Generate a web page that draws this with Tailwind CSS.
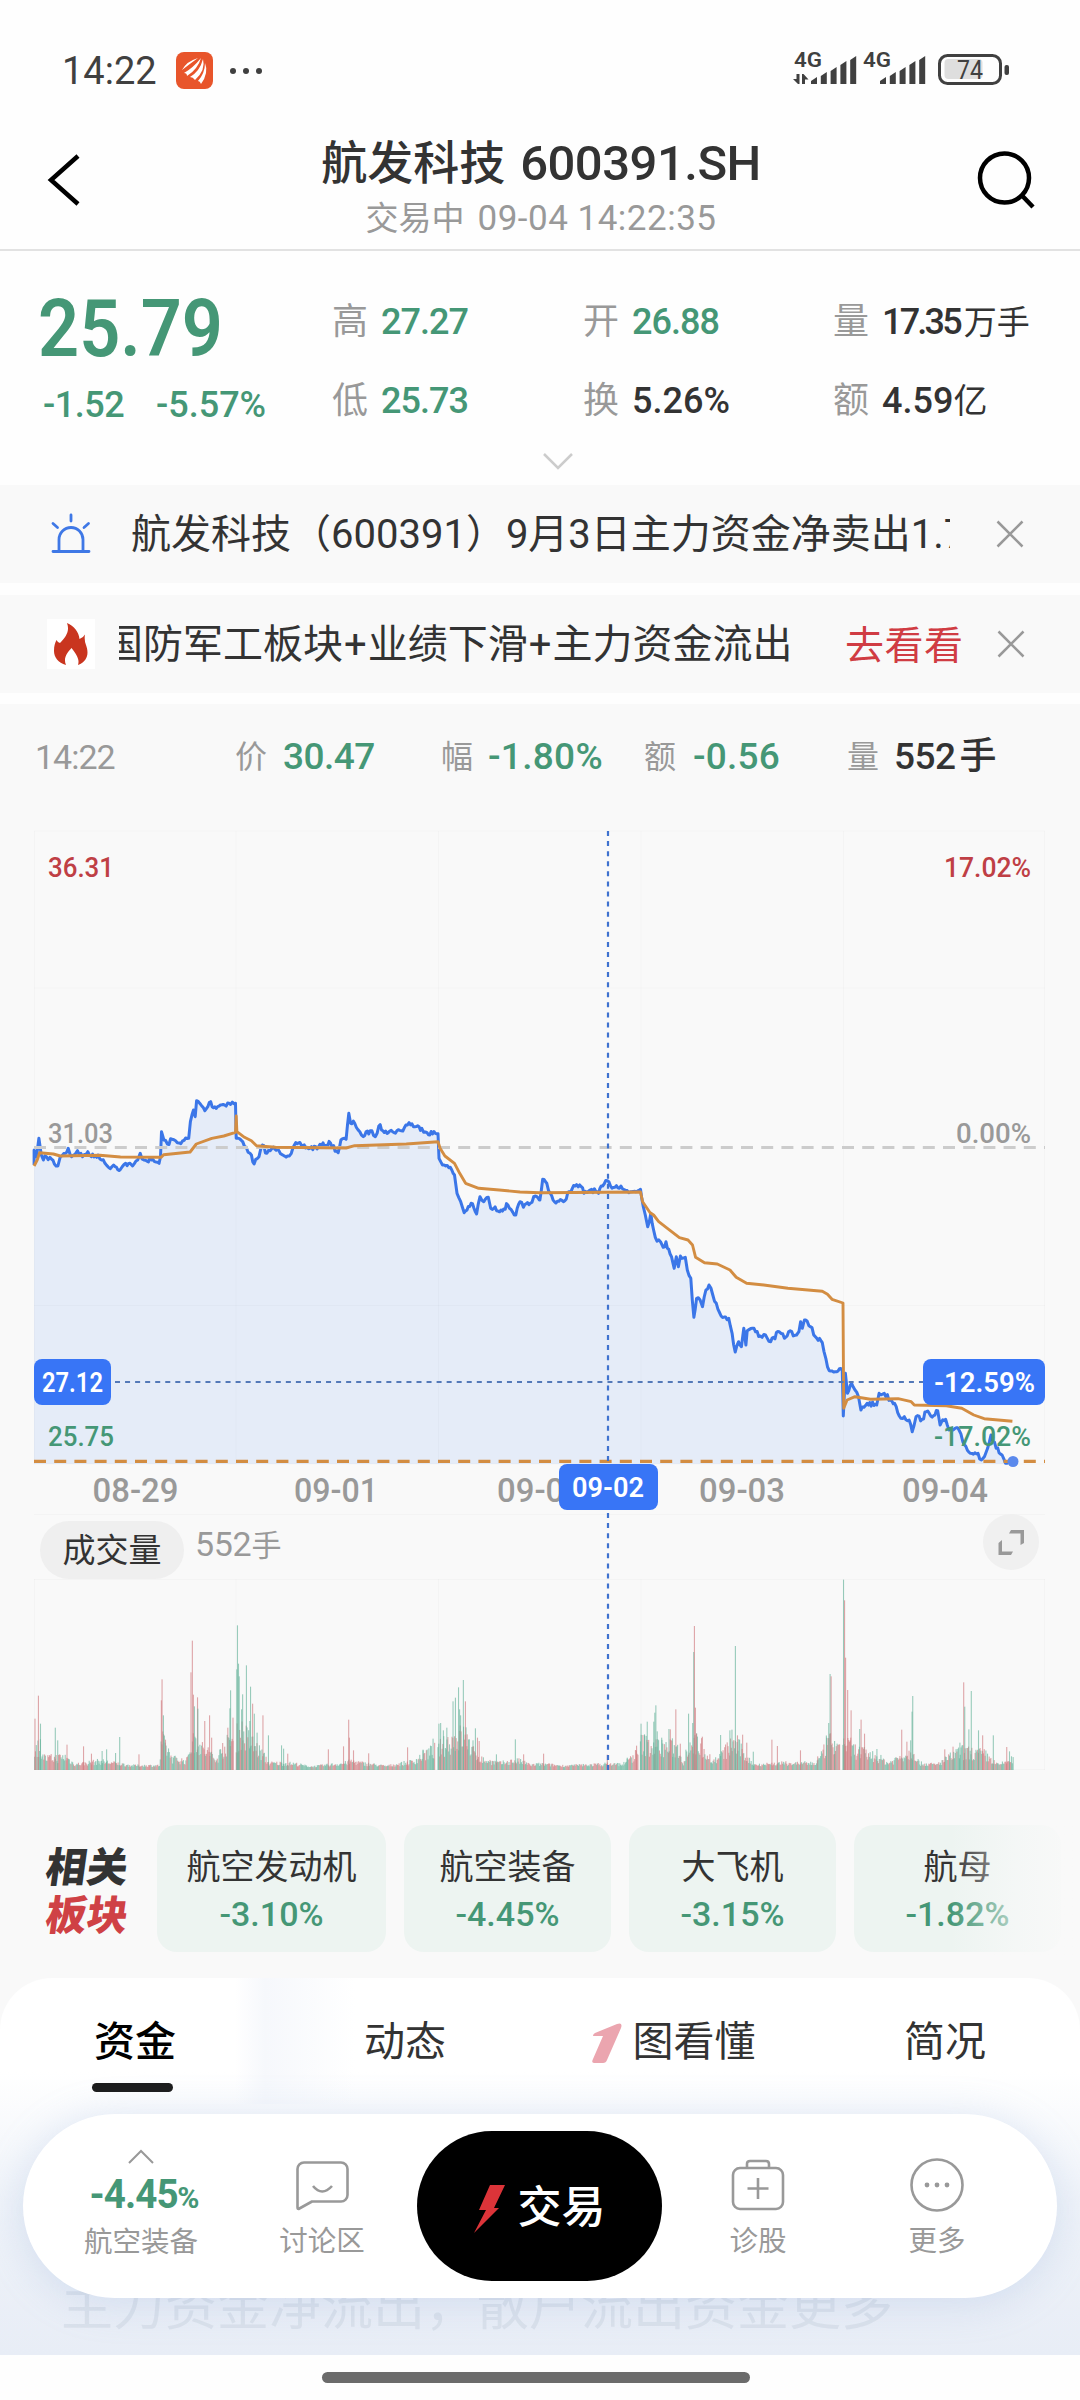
<!DOCTYPE html>
<html lang="zh-CN">
<head>
  <meta charset="UTF-8" />
  <title>航发科技 600391.SH</title>
  <script src="https://cdn.jsdelivr.net/npm/@tailwindcss/browser@4"></script>
</head>
<body class="w-[1080px] h-[2400px] overflow-hidden bg-[#fefefe] text-[#333] leading-none whitespace-nowrap font-['Roboto','Noto_Sans_CJK_SC',sans-serif]">
<div class="relative w-[1080px] h-[2400px] flex flex-col">

  <!-- Status bar -->
  <div class="h-[105px] pt-[52px] pl-[62px] pr-[70px] flex justify-between shrink-0">
    <div class="flex h-[37px] items-center">
      <span class="text-[38px] w-[114px] text-[#404040]">14:22</span>
      <svg class="w-[37px] h-[37px]" viewBox="0 0 37 37">
        <rect width="37" height="37" rx="8" fill="#e8552b"/>
        <path d="M6 18Q11 9 22 6Q15 11 6 18ZM8 21Q17 16 25 6Q22 17 11 24Q11 21 8 21ZM14 25Q24 19 27 7Q30 18 19 28Q17 25 14 25ZM22 29Q29 21 29 11Q33 21 25 32Q24 29 22 29Z" fill="#fff"/>
      </svg>
      <svg class="ml-4 w-[34px] h-[8px]" viewBox="0 0 34 8" fill="#404040"><circle cx="4" cy="4" r="3"/><circle cx="17" cy="4" r="3"/><circle cx="30" cy="4" r="3"/></svg>
    </div>
    <svg class="w-[218px] h-[41px] -mt-1" viewBox="792 48 218 41" fill="#404040">
      <text x="794" y="67" font-size="20" font-weight="600" textLength="28" lengthAdjust="spacingAndGlyphs">4G</text>
      <text x="863" y="67" font-size="20" font-weight="600" textLength="28" lengthAdjust="spacingAndGlyphs">4G</text>
      <path d="M796.500 74h3v10h-1.500L793 79h3.500zM802 74h1.500l5 5.500h-3.500V84h-3z"/>
      <path id="bars"/>
      <rect x="939.500" y="55.500" width="61" height="28" rx="8" fill="none" stroke="#404040" stroke-width="3"/>
      <rect x="944.500" y="59" width="38" height="20" rx="4" fill="#dedede"/>
      <rect x="1004.500" y="65" width="4.500" height="10" rx="2"/>
      <text x="957" y="78.500" font-size="25" textLength="26" lengthAdjust="spacingAndGlyphs">74</text>
    </svg>
  </div>

  <!-- Title bar -->
  <div class="h-[146px] border-b-2 border-[#e2e2e2] flex justify-between pl-[46px] pr-[44px] shrink-0">
    <svg class="w-9 h-14 mt-[47px]" viewBox="0 0 36 56"><path d="M32 4L5 28L32 52" fill="none" stroke="#000" stroke-width="4.500"/></svg>
    <div class="flex flex-col items-center pt-[33px] pl-[24px]">
      <div class="flex items-center h-[50px] text-[49px] font-medium"><span class="text-[46px] mr-[15px]">航发科技</span><span class="tracking-[-0.5px]">600391.SH</span></div>
      <div class="flex items-center h-9 mt-3 text-[35px] text-[#999]"><span class="text-[33px] mr-[13px]">交易中</span><span class="tracking-[0.5px]">09-04 14:22:35</span></div>
    </div>
    <svg class="w-[60px] h-[60px] mt-[45px]" viewBox="0 0 60 60" fill="none" stroke="#000" stroke-width="4.500"><circle cx="28.500" cy="28" r="24.500"/><path d="M45.500 45L57 57"/></svg>
  </div>

  <!-- Quote -->
  <div class="h-[234px] shrink-0 flex flex-col">
    <div class="h-[190px] flex pl-[38px] text-[#459776] font-medium">
      <div class="w-[294px] pt-[38px]">
        <div class="text-[80px] font-semibold"><span class="inline-block origin-left scale-x-90">25.79</span></div>
        <div class="mt-[18px] pl-[5px] flex text-[36px]"><span class="w-[113px] tracking-[-0.5px]">-1.52</span><span>-5.57%</span></div>
      </div>
      <div class="grid grid-cols-[251px_250px_247px] grid-rows-[79px_79px] pt-[31px] text-[36px] tracking-[-1px] items-center">
        <div class="flex items-center"><span class="w-[49px] text-[36px] font-normal text-[#999]">高</span><span>27.27</span></div>
        <div class="flex items-center"><span class="w-[49px] text-[36px] font-normal text-[#999]">开</span><span>26.88</span></div>
        <div class="flex items-center"><span class="w-[49px] text-[36px] font-normal text-[#999]">量</span><span class="text-[#333] tracking-[-2.8px]">17.35<span class="text-[33px] tracking-normal ml-1 font-normal">万手</span></span></div>
        <div class="flex items-center"><span class="w-[49px] text-[36px] font-normal text-[#999]">低</span><span>25.73</span></div>
        <div class="flex items-center"><span class="w-[49px] text-[36px] font-normal text-[#999]">换</span><span class="text-[#333] tracking-normal">5.26%</span></div>
        <div class="flex items-center"><span class="w-[49px] text-[36px] font-normal text-[#999]">额</span><span class="text-[#333] tracking-normal">4.59<span class="text-[34px] font-normal">亿</span></span></div>
      </div>
    </div>
    <svg class="w-8 h-5 ml-[542px] mt-[10px]" viewBox="0 0 32 20"><path d="M2 3L16 17L30 3" fill="none" stroke="#ccc" stroke-width="2.500"/></svg>
  </div>

  <!-- Notices -->
  <div class="h-[98px] shrink-0 bg-[#f9f9f9] flex items-center pl-[50px] text-[40px]">
    <svg class="w-[42px] h-[42px] mr-[39px]" viewBox="0 0 42 42" fill="none" stroke="#3f78e6" stroke-width="2.800" stroke-linecap="round"><path d="M3 38.500H39M9 38V26.500a12 12 0 0 1 24 0V38M21 2V8M3 10.500l4.500 4M38.500 10.500l-4.500 4"/></svg>
    <div class="w-[819px] overflow-hidden h-[50px] leading-[50px] pt-[1px]">航发科技（600391）9月3日主力资金净卖出1.74亿元</div>
    <svg class="w-7 h-7 ml-[46px]" viewBox="0 0 28 28"><path d="M1.500 1.500L26.500 26.500M26.500 1.500L1.500 26.500" stroke="#999" stroke-width="2.500"/></svg>
  </div>
  <div class="h-[98px] mt-3 shrink-0 bg-[#f9f9f9] flex items-center pl-[47px] text-[40px]">
    <div class="w-12 h-[50px] bg-white mr-6 flex items-center justify-center">
      <svg class="w-[34px] h-[42px]" viewBox="0 0 34 42"><path d="M13 0C20 3 25 9 25.500 16Q29 15 31 11.500Q30 17 32 22C35 30 34 38 24 42C26 36 22 31 17.500 25C13 30 9 35 12 42C4 40 0 34 0 28C0 23 1 20 2.500 17Q4 20 6 20C12 14 16 8 13 0Z" fill="#c9351f"/></svg>
    </div>
    <div class="w-[671px] overflow-hidden h-[50px] leading-[50px] pt-[1px] flex"><span class="-ml-4">国防军工板块<span class="mx-[1px]">+</span>业绩下滑<span class="mx-[1px]">+</span>主力资金流出</span></div>
    <span class="text-[#d03c43] text-[39px] ml-[55px] mt-1 tracking-[0.5px]">去看看</span>
    <svg class="w-7 h-7 ml-[33px]" viewBox="0 0 28 28"><path d="M1.500 1.500L26.500 26.500M26.500 1.500L1.500 26.500" stroke="#999" stroke-width="2.500"/></svg>
  </div>

  <!-- Chart -->
  <div class="relative mt-[11px] h-[1121px] shrink-0 bg-[#f9f9f9] flex flex-col">
    <div class="h-[105px] flex items-center pl-[35px] text-[37px] font-medium text-[#459776]">
      <span class="w-[200px] text-[34px] font-normal text-[#999] tracking-[-1px]">14:22</span>
      <span class="w-[48px] text-[32px] font-normal text-[#999]">价</span><span class="w-[158px] tracking-[-0.5px]">30.47</span>
      <span class="w-[47px] text-[32px] font-normal text-[#999]">幅</span><span class="w-[156px] tracking-[0.3px]">-1.80%</span>
      <span class="w-[49px] text-[32px] font-normal text-[#999]">额</span><span class="w-[154px] tracking-[0.2px]">-0.56</span>
      <span class="w-[47px] text-[32px] font-normal text-[#999]">量</span><span class="text-[#333] tracking-[-0.5px]">552<span class="ml-1">手</span></span>
    </div>
    <svg class="w-[1080px] h-[706px] shrink-0" viewBox="0 809 1080 706">
      <path id="area" fill="#e5ecf8"/>
      <path d="M34 831H1045M34 988H1045M34 1305.500H1045M34 1464H1045M34 1514.500H1045M34.500 831V1464M236 831V1464M438.500 831V1464M641 831V1464M843.500 831V1464M1044.500 831V1464" stroke="#000" stroke-opacity="0.020" fill="none"/>
      <polyline id="price" fill="none" stroke="#3b76e8" stroke-width="3" stroke-linejoin="round"/>
      <path d="M34 1147.500H1045" stroke="#ccc" stroke-width="2.800" stroke-dasharray="12 8.200"/>
      <polyline id="avg" fill="none" stroke="#d38d42" stroke-width="2.900" stroke-linejoin="round"/>
      <path d="M34 1461.300H1045" stroke="#d38d42" stroke-width="3.200" stroke-dasharray="12 8.200"/>
      <circle cx="1013" cy="1461.500" r="5.500" fill="#5b89ec"/>
      <path d="M115 1382H923" stroke="#5479b8" stroke-width="2" stroke-dasharray="5 5.050"/>
      <g font-size="28" font-weight="500">
        <text x="48" y="877" textLength="66" lengthAdjust="spacingAndGlyphs" fill="#bf3f45">36.31</text>
        <text x="944" y="877" textLength="87" lengthAdjust="spacingAndGlyphs" fill="#bf3f45">17.02%</text>
        <text x="48" y="1143" textLength="65" lengthAdjust="spacingAndGlyphs" fill="#999">31.03</text>
        <text x="956" y="1143" textLength="75" lengthAdjust="spacingAndGlyphs" fill="#999">0.00%</text>
        <text x="48" y="1446" textLength="66" lengthAdjust="spacingAndGlyphs" fill="#459776">25.75</text>
        <text x="934" y="1446" textLength="97" lengthAdjust="spacingAndGlyphs" fill="#459776">-17.02%</text>
      </g>
      <g font-size="33" font-weight="500" fill="#999" text-anchor="middle">
        <text x="135.500" y="1502" textLength="86" lengthAdjust="spacingAndGlyphs">08-29</text>
        <text x="336" y="1502" textLength="84" lengthAdjust="spacingAndGlyphs">09-01</text>
        <text x="540" y="1502" textLength="86" lengthAdjust="spacingAndGlyphs">09-02</text>
        <text x="742" y="1502" textLength="86" lengthAdjust="spacingAndGlyphs">09-03</text>
        <text x="945" y="1502" textLength="86" lengthAdjust="spacingAndGlyphs">09-04</text>
      </g>
      <g fill="#3875f6">
        <rect x="34" y="1359" width="77" height="46" rx="8"/>
        <rect x="923" y="1359" width="122" height="46" rx="8"/>
        <rect x="559" y="1464" width="99" height="46" rx="8"/>
      </g>
      <g font-size="28" font-weight="600" fill="#fff">
        <text x="42" y="1392" textLength="61" lengthAdjust="spacingAndGlyphs">27.12</text>
        <text x="934" y="1392" textLength="101" lengthAdjust="spacingAndGlyphs">-12.59%</text>
        <text x="572" y="1497" textLength="72" lengthAdjust="spacingAndGlyphs">09-02</text>
      </g>
    </svg>
    <div class="h-16 flex items-start justify-between pl-10 pr-[41px]">
      <div class="flex">
        <span class="mt-[6px] w-36 h-[58px] rounded-full bg-[#efefef] flex items-center justify-center text-[33px]">成交量</span>
        <span class="mt-[12px] ml-[11px] text-[34px] text-[#999] tracking-[-0.3px]">552<span class="text-[30px]">手</span></span>
      </div>
      <svg class="w-14 h-14 -mt-[1px]" viewBox="0 0 56 56"><circle cx="28" cy="28" r="28" fill="#f0f0f0"/><path d="M28 16H41V29L37.500 31V19.500H26ZM19 26V37.500H30L28 41H15.500V29Z" fill="#999"/></svg>
    </div>
    <svg id="volume" class="w-[1080px] h-[192px] shrink-0" viewBox="0 1579 1080 192">
      <path d="M34 1579.500H1045M34 1769.500H1045M34.500 1579V1770M236 1579V1770M438.500 1579V1770M641 1579V1770M843.500 1579V1770M1044.500 1579V1770" stroke="#000" stroke-opacity="0.020" fill="none"/>
    </svg>
    <!-- Crosshair over both charts -->
    <svg class="absolute left-[606px] top-[127px] w-1 h-[940px]" viewBox="0 831 4 940"><path d="M2 831V1464M2 1513V1770" stroke="#3f72cf" stroke-width="2.200" stroke-dasharray="5 5.080"/></svg>
  </div>

  <!-- Related sectors -->
  <div class="relative h-[153px] shrink-0 bg-[#f9f9f9] flex pl-[46px]">
    <div class="w-[111px] pt-[23px] flex flex-col items-start gap-[7px] text-[41px] font-black">
      <span class="-skew-x-8">相关</span><span class="-skew-x-8 text-[#cf4145]">板块</span>
    </div>
    <div class="flex gap-[18px]">
      <div class="w-[229px] h-[127px] rounded-[20px] bg-[#edf4f1] flex flex-col items-center pt-[25px] gap-[13px]"><span class="text-[34px]">航空发动机</span><span class="text-[34px] font-medium text-[#459776]">-3.10%</span></div>
      <div class="w-[207px] h-[127px] rounded-[20px] bg-[#edf4f1] flex flex-col items-center pt-[25px] gap-[13px]"><span class="text-[34px]">航空装备</span><span class="text-[34px] font-medium text-[#459776]">-4.45%</span></div>
      <div class="w-[207px] h-[127px] rounded-[20px] bg-[#edf4f1] flex flex-col items-center pt-[25px] gap-[13px]"><span class="text-[34px]">大飞机</span><span class="text-[34px] font-medium text-[#459776]">-3.15%</span></div>
      <div class="w-[207px] h-[127px] rounded-[20px] bg-[#edf4f1] flex flex-col items-center pt-[25px] gap-[13px]"><span class="text-[34px]">航母</span><span class="text-[34px] font-medium text-[#459776]">-1.82%</span></div>
    </div>
    <div class="absolute right-0 top-0 w-[130px] h-[130px] bg-linear-to-r from-[#f9f9f9]/0 via-[#f9f9f9]/60 to-[#f9f9f9]"></div>
  </div>

  <!-- Tabs -->
  <div class="h-[377px] shrink-0 bg-[#f9f9f9]">
    <div class="relative h-full overflow-hidden rounded-t-[52px] bg-linear-to-b from-white from-25% via-[#eff3f9] via-60% to-[#e8edf6]">
      <div class="absolute left-[235px] top-0 w-[120px] h-[126px] bg-linear-to-r from-white/0 via-[#f6f8fc] via-25% to-white/0"></div>
      <div class="relative grid grid-cols-4 h-[126px] text-[41px]">
        <div class="flex flex-col items-center pt-[44px] text-black font-medium">资金<span class="mt-5 -ml-[5px] w-[81px] h-[9px] rounded-full bg-[#1c1c1c]"></span></div>
        <div class="flex justify-center pt-[44px]">动态</div>
        <div class="flex justify-center pt-[44px] -ml-[3px]"><svg class="w-[31px] h-10 mt-[1px] mr-[10px]" viewBox="0 0 31 40"><path d="M3 10L25 1Q31 -1 29 5L15 37Q14 40 11 40H2Q-1 40 1 36L11 13H1Q1 11 3 10Z" fill="#eba5af"/></svg>图看懂</div>
        <div class="flex justify-center pt-[44px]">简况</div>
      </div>
      <div class="relative mt-[178px] pl-[61px] text-[52px] text-[#dae1eb]">主力资金净流出，散户流出资金更多</div>
    </div>
  </div>

  <!-- Home indicator -->
  <div class="h-[45px] pt-[17px] pl-[322px]"><div class="w-[428px] h-[11px] rounded-full bg-[#6b6b6b]"></div></div>

  <!-- Floating nav -->
  <div class="absolute left-[23px] top-[2114px] w-[1034px] h-[184px] rounded-full bg-white shadow-[0_4px_40px_rgba(140,170,215,0.28)] flex text-[28.5px] text-[#999]">
    <div class="ml-[53px] w-[130px] pt-[35px] flex flex-col items-center">
      <svg class="w-[26px] h-[15px]" viewBox="0 0 26 15"><path d="M1 14L13 2L25 14" fill="none" stroke="#999" stroke-width="2"/></svg>
      <div class="mt-[10px] text-[41px] font-bold text-[#459776] tracking-[-1px]"><span class="inline-block origin-right scale-x-94">-4.45</span><span class="text-[30px]">%</span></div>
      <span class="mt-[14px]">航空装备</span>
    </div>
    <div class="ml-[51px] w-[130px] pt-[46px] flex flex-col items-center">
      <svg class="w-[54px] h-[52px]" viewBox="0 0 54 52" fill="none" stroke="#999" stroke-width="2.600" stroke-linejoin="round"><path d="M9 2.500H46a6.500 6.500 0 0 1 6.500 6.500V35a6.500 6.500 0 0 1-6.500 6.500H17L3.500 49Q2.500 49 2.500 47V9A6.500 6.500 0 0 1 9 2.500ZM18 26Q27 37 37 26"/></svg>
      <span class="mt-4">讨论区</span>
    </div>
    <div class="ml-[30px] mt-[17px] w-[245px] h-[150px] rounded-full bg-black text-white text-[44px] font-medium flex items-center justify-center">
      <svg class="w-[31px] h-[48px] mr-[13px] mt-[5px]" viewBox="0 0 31 48"><path d="M16 0H31L20 23H25L0 48L12 25H5Z" fill="#dc3439"/></svg><span class="mt-1">交易</span>
    </div>
    <div class="ml-[31px] w-[130px] pt-[45px] flex flex-col items-center">
      <svg class="w-[54px] h-[53px]" viewBox="0 0 54 53" fill="none" stroke="#999" stroke-width="2.600"><rect x="2" y="9" width="50" height="41" rx="7"/><path d="M16 9V5Q16 2 19 2H35Q38 2 38 5V9M27 19V40M16.500 29.500H37.500"/></svg>
      <span class="mt-4">诊股</span>
    </div>
    <div class="ml-[49px] w-[130px] pt-[44px] flex flex-col items-center">
      <svg class="w-[54px] h-[54px]" viewBox="0 0 54 54" fill="#999"><circle cx="27" cy="27" r="25.500" fill="none" stroke="#999" stroke-width="2.600"/><circle cx="17" cy="27" r="2.400"/><circle cx="27" cy="27" r="2.400"/><circle cx="37" cy="27" r="2.400"/></svg>
      <span class="mt-4">更多</span>
    </div>
  </div>
</div>

<script>
  const SVG = "http://www.w3.org/2000/svg";
  const SX = 1 / 2.904, SY = 1 / 3;
  let seed = 7;
  const rnd = () => (seed = (seed * 16807) % 2147483647) / 2147483647;
  const parse = s => s.trim().split(/\s+/).map(p => p.split(",").map(Number));
  const add = (parent, x, y, w, h, fill, op) => {
    const r = document.createElementNS(SVG, "rect");
    Object.entries({ x, y, width: w, height: h, fill, opacity: op }).forEach(([k, v]) => r.setAttribute(k, v));
    parent.appendChild(r);
  };

  // signal bars, slanted tops
  document.getElementById("bars").setAttribute("d", [811, 880].map(x0 =>
    [7, 12, 17, 23, 28].map((h, i) => `M${x0 + i * 9.8} 84v${4 - h}l6 -4v${h}z`).join("")).join(""));

  // price line: x,y in chart units, one string per half
  const shift = (s, d) => parse(s).map(([x, y]) => [x + d, y]);
  const price = [
    ...parse(`99,315 99,270 106,290 113,235 120,285 126,300 135,290 150,298 158,312 168,318 175,290 190,280 198,265 208,290 225,272 240,290 255,275 265,290 285,285 295,300 305,310 315,322 330,315 350,328 365,310 385,318 400,300 407,280 418,300 440,300 462,310 466,290 469,215 476,240 486,252 500,238 515,248 530,243 548,235 553,185 562,150 567,170 571,122 580,130 595,152 612,125 620,143 640,135 665,130 684,130 686,235 700,240 715,262 726,280 738,312 752,290 762,255 775,280 790,265 810,272 835,288 846,280 855,255 875,255 900,265 925,260 960,250 982,278 990,240 1005,238 1013,160 1018,190 1030,190 1045,215 1055,230 1075,212 1090,230 1100,198 1120,213 1140,215 1165,212 1188,188 1205,200 1225,205 1240,218 1272,221 1275,295 1290,315 1312,330 1320,345 1327,400 1338,425 1348,458 1368,430 1384,462 1394,410 1405,425 1418,412 1425,445 1455,450 1475,435 1498,465 1510,425 1520,442 1540,430 1550,410 1566,420`),
    ...shift(`0,420 8,358 20,370 30,400 42,425 68,425 85,395 102,378 120,380 128,400 150,388 170,400 182,378 196,362 205,378 235,378 258,398 292,388 300,440 306,465 313,500 322,460 330,510 335,532 350,545 358,562 366,545 378,582 390,625 396,590 402,620 408,588 422,592 428,630 438,655 447,772 455,715 465,720 472,740 482,690 491,675 502,705 512,730 526,768 548,775 558,820 567,876 577,845 585,860 592,805 598,855 602,812 617,805 640,828 655,825 670,845 695,815 710,835 722,815 745,825 752,815 757,785 762,805 768,780 785,800 800,830 820,848 830,895 840,932 878,932 881,1068 887,940 893,1000 905,970 915,990 925,1010 932,1050 950,1030 978,1035 985,1000 1000,1000 1018,1020 1030,1030 1048,1075 1058,1070 1072,1080 1081,1115 1092,1070 1110,1078 1122,1055 1135,1068 1155,1052 1162,1095 1178,1078 1188,1110 1217,1110 1228,1145 1250,1180 1272,1180 1282,1200 1300,1165 1310,1125 1325,1165 1342,1185 1352,1210 1374,1205`, 1568)
  ];
  const avg = [
    ...parse(`99,318 108,300 115,278 155,282 175,288 290,286 350,291 468,292 475,284 552,276 570,252 615,235 650,228 684,217 686,168 688,215 710,232 730,242 745,257 800,262 1005,264 1030,257 1180,252 1272,245 1278,265 1292,288 1320,310 1335,340 1352,370 1390,385 1450,390 1510,396 1568,398`),
    ...shift(`0,398 292,396 298,425 320,458 330,465 345,485 370,505 405,533 430,540 443,555 452,592 478,608 515,612 552,630 570,652 600,670 650,675 720,685 820,694 835,703 848,718 880,729 882,1045 892,1020 915,1010 960,1018 1040,1016 1078,1025 1087,1035 1180,1037 1225,1045 1260,1065 1290,1076 1372,1084`, 1568)
  ];
  const toPx = ([x, y]) => (x * SX).toFixed(1) + "," + (1060 + y * SY).toFixed(1);

  // small ticks between the main points
  const ticks = [];
  price.forEach((p, i) => {
    ticks.push(p);
    const n = price[i + 1];
    if (!n) return;
    const steps = Math.floor((n[0] - p[0]) / 4);
    for (let k = 1; k < steps; k++) {
      const t = k / steps;
      ticks.push([p[0] + (n[0] - p[0]) * t, p[1] + (n[1] - p[1]) * t + (rnd() - 0.5) * 15]);
    }
  });
  const line = ticks.map(toPx).join(" ");
  document.getElementById("price").setAttribute("points", line);
  document.getElementById("avg").setAttribute("points", avg.map(toPx).join(" "));
  document.getElementById("area").setAttribute("d", "M34,1464 L" + line + " L1013,1464 Z");

  // volume: background level, then the single peaks
  const level = [
    ...parse(`99,75 115,80 130,35 190,40 215,14 290,25 380,10 462,10 468,100 500,35 540,25 548,70 570,110 590,60 605,60 625,25 640,60 665,95 684,110 700,130 730,90 760,50 780,18 830,18 860,15 900,6 1000,18 1020,25 1050,18 1120,8 1200,24 1230,50 1272,70 1310,100 1350,120 1370,60 1400,30 1450,18 1500,28 1540,12`),
    ...shift(`0,15 70,9 190,15 240,15 283,55 293,90 330,80 400,70 415,20 430,90 460,90 480,60 500,24 520,40 560,90 580,70 600,36 620,13 700,18 800,18 820,50 835,100 868,60 881,100 900,70 950,50 980,40 1010,18 1050,45 1085,60 1100,18 1150,13 1160,20 1220,60 1290,50 1315,24 1330,12 1374,34`, 1568)
  ];
  const peaksL = "r101,655 r111,586 g117,670 g160,682 g167,720 r194,733 r242,738 r265,760 g296,752 g309,747 g335,758 g347,710 r403,762 r470,537 r468,600 g474,645 r480,718 r554,516 r558,421 r561,583 g564,618 r573,591 g574,625 r594,662 r608,645 r614,712 r646,728 r661,682 g669,570 g667,624 r676,652 g689,375 g687,507 g692,490 g694,528 g704,582 g701,627 g715,495 g727,559 g725,662 r733,610 g738,640 g746,697 r763,645 g779,705 g817,735 g823,745 r835,760 r953,747 r997,738 r1012,658 r1014,712 r1026,750 r1070,759 r1183,741 g1228,750 g1257,715 g1274,670 g1279,668 g1287,690 g1297,682 g1315,603 g1322,592 g1331,561 g1334,627 g1345,539 r1351,603 g1337,645 r1356,702 g1380,684 r1386,712 g1373,720 r1391,722 g1441,762 g1496,717 r1520,762";
  const peaksR = "r10,760 r195,763 g253,772 r280,736 g293,670 g303,702 g311,664 g330,664 g333,637 g336,615 g340,693 g353,712 g374,686 r378,687 r394,627 g384,714 r407,730 g431,640 g446,455 r448,377 r451,622 g443,668 r454,700 r471,709 g524,704 g551,690 g557,688 g567,437 r573,705 r588,703 r600,727 r673,718 r689,737 g619,754 r756,750 r806,768 g838,668 g842,521 r845,528 g832,712 g855,722 g881,238 r884,300 r887,472 r893,569 r903,630 r902,712 g928,686 r932,658 r942,700 g978,746 r1050,688 r1065,724 g1080,634 g1082,587 g1076,720 r1175,747 r1199,739 r1230,546 g1233,619 g1252,572 g1245,687 g1273,690 r1285,705 g1316,705 r1355,740 g1363,753 g1219,727";
  const vol = document.getElementById("volume");
  const bar = (x, h, red) => add(vol, x * SX, 1770 - h * SY, 1.1, h * SY, red ? "#d07a7e" : "#66b39b", 0.66);
  const gaps = [[677, 684], [1263, 1270], [1852, 1858], [2438, 2445]];
  let li = 0, red = true;
  for (let x = 99; x < 2942; x += 2.4) {
    while (li < level.length - 2 && level[li + 1][0] < x) li++;
    const [a, b] = [level[li], level[li + 1]];
    const base = a[1] + (b[1] - a[1]) * Math.min(1, (x - a[0]) / (b[0] - a[0]));
    if (rnd() < 0.4) red = !red;
    if (gaps.some(g => x > g[0] && x < g[1])) continue;
    bar(x, 5 + base * (0.4 + rnd() * 0.8), red);
  }
  [[peaksL, 0], [peaksR, 1568]].forEach(([s, d]) => s.split(" ").forEach(p => {
    const [x, y] = p.slice(1).split(",").map(Number);
    bar(x + d - 1, 809 - y, p[0] === "r");
  }));
</script>
</body>
</html>
